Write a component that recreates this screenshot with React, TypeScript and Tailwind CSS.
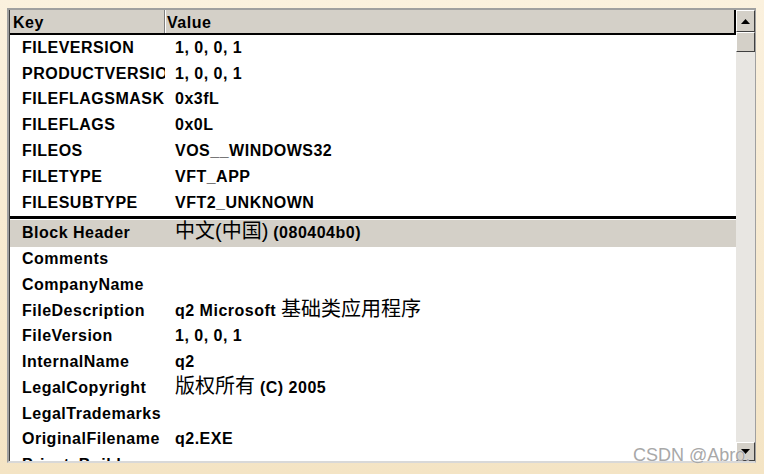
import React from 'react';

type Row = { k: string; v: React.ReactNode; hl?: boolean };

const cjk = (s: string) => <span className="font-normal text-[20px] tracking-normal leading-none">{s}</span>;

const fixedRows: Row[] = [
  { k: 'FILEVERSION', v: '1, 0, 0, 1' },
  { k: 'PRODUCTVERSION', v: '1, 0, 0, 1' },
  { k: 'FILEFLAGSMASK', v: '0x3fL' },
  { k: 'FILEFLAGS', v: '0x0L' },
  { k: 'FILEOS', v: 'VOS__WINDOWS32' },
  { k: 'FILETYPE', v: 'VFT_APP' },
  { k: 'FILESUBTYPE', v: 'VFT2_UNKNOWN' },
];

const blockRows: Row[] = [
  { k: 'Comments', v: '' },
  { k: 'CompanyName', v: '' },
  { k: 'FileDescription', v: <>q2 Microsoft {cjk('基础类应用程序')}</> },
  { k: 'FileVersion', v: '1, 0, 0, 1' },
  { k: 'InternalName', v: 'q2' },
  { k: 'LegalCopyright', v: <>{cjk('版权所有')} (C) 2005</> },
  { k: 'LegalTrademarks', v: '' },
  { k: 'OriginalFilename', v: 'q2.EXE' },
  { k: 'PrivateBuild', v: '' },
];

function ListRow({ row, h }: { row: Row; h: string }) {
  return (
    <div className={`flex items-center shrink-0 ${h} ${row.hl ? 'bg-[#d4d0c8]' : ''}`}>
      <div className="w-[155px] shrink-0 overflow-hidden whitespace-nowrap pl-3">{row.k}</div>
      <div className="pl-[10px] whitespace-nowrap">{row.v}</div>
    </div>
  );
}

export default function App() {
  return (
    <div className="relative w-[764px] h-[474px] overflow-hidden bg-[#f6e8cc] bg-gradient-to-b from-[#fbf1de] to-[#f4e4c4] pt-[8px] pl-[7px]">
      <div className="w-[749px] h-[455px] flex border-t-2 border-l-2 border-[#a0a0a0] border-b-2 border-b-[#d8d8d8] border-r border-r-[#a0a0a0] bg-white font-['Liberation_Sans','Noto_Sans_CJK_SC',sans-serif] text-[16px] font-bold tracking-[0.5px] text-black">
        {/* list */}
        <div className="flex-1 flex flex-col overflow-hidden border-l border-[#404040]">
          <div className="flex h-[25px] shrink-0 bg-[#d4d0c8] border-b-2 border-black border-r-2 border-r-black">
            <div className="w-[155px] pl-[3px] pt-[2px] flex items-center border-r border-[#808080] shadow-[1px_0_0_#fff]">Key</div>
            <div className="pl-[2px] pt-[2px] flex items-center">Value</div>
          </div>
          {fixedRows.map((r) => (
            <ListRow key={r.k} row={r} h="h-[25.8px]" />
          ))}
          <div className="h-[3px] bg-black shrink-0" />
          <div className="h-[1px] shrink-0" />
          <ListRow
            row={{ k: 'Block Header', v: <>{cjk('中文(中国)')} (080404b0)</>, hl: true }}
            h="h-[27px]"
          />
          {blockRows.map((r) => (
            <ListRow key={r.k} row={r} h="h-[25.7px]" />
          ))}
        </div>
        {/* scrollbar */}
        <div className="w-[19px] shrink-0 flex flex-col bg-[#e8e6e2]">
          <div className="h-[22px] bg-[#d4d0c8] border border-t-white border-l-white border-r-[#404040] border-b-[#404040] flex items-center justify-center">
            <svg width="9" height="5" viewBox="0 0 9 5"><path d="M4.5 0 L9 5 L0 5 Z" fill="#000" /></svg>
          </div>
          <div className="h-[20px] bg-[#d4d0c8] border border-t-white border-l-white border-r-[#404040] border-b-[#404040]" />
          <div className="flex-1" />
          <div className="h-[19px] bg-[#d4d0c8] border border-t-white border-l-white border-r-[#404040] border-b-[#404040] flex items-center justify-center">
            <svg width="9" height="5" viewBox="0 0 9 5"><path d="M0 0 L9 0 L4.5 5 Z" fill="#000" /></svg>
          </div>
        </div>
      </div>
      <div className="absolute left-[633px] top-[442px] text-[18px] text-[#a8a8a8] font-['Liberation_Sans',sans-serif] [text-shadow:0_0_1px_#fff]">
        CSDN @Abro.
      </div>
    </div>
  );
}
